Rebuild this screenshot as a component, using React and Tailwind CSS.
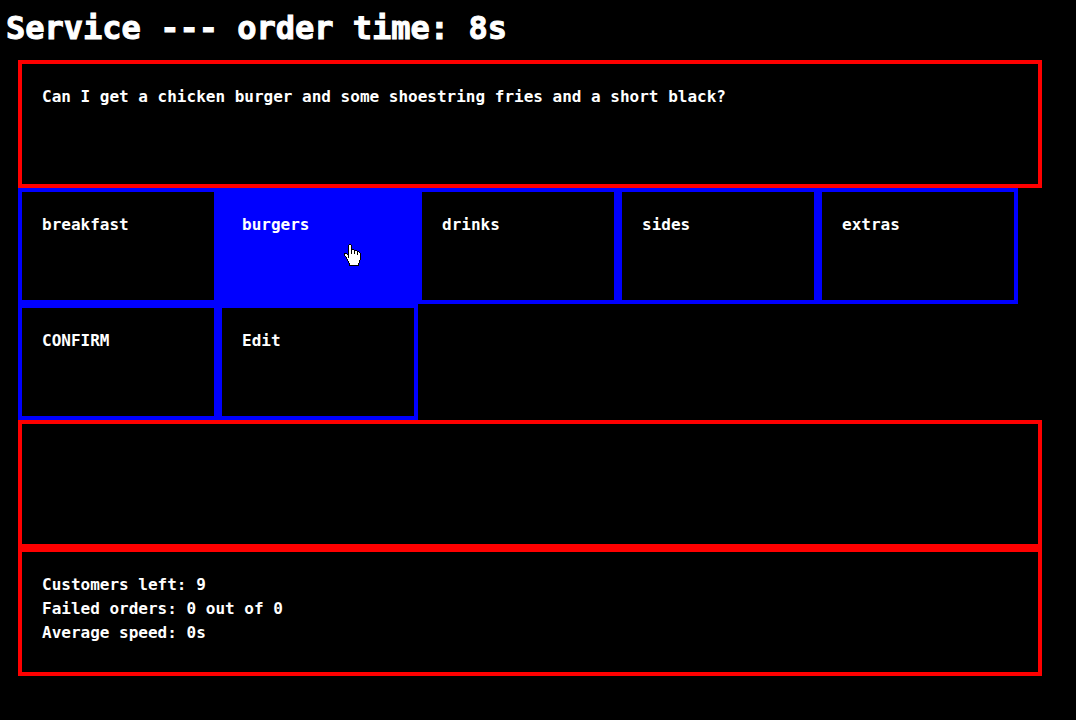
const HAND = [
  "     ##          ",
  "    #..#         ",
  "    #..#         ",
  "    #..#         ",
  "    #..#         ",
  "    #..###       ",
  "    #..#..###    ",
  "    #..#..#..##  ",
  "    #..#..#..#.# ",
  "### #..#..#..#..#",
  "#..##........#..#",
  "#...#...........#",
  " #..#...........#",
  "  #.#...........#",
  "  #.............#",
  "   #............#",
  "   #...........# ",
  "    #..........# ",
  "    #..........# ",
  "     #........#  ",
  "     #........#  ",
  "     ##########  ",
];

function pixels(mark) {
  return HAND.map((row, y) =>
    [...row].map((c, x) => (c === mark ? `M${x} ${y}h1v1h-1z` : "")).join("")
  ).join("");
}

function HandPointer() {
  return (
    <svg
      aria-hidden="true"
      viewBox="0 0 17 22"
      shapeRendering="crispEdges"
      className="pointer-events-none absolute left-[122px] top-[52px] h-[22px] w-[17px]"
    >
      <path d={pixels("#")} fill="#000" />
      <path d={pixels(".")} fill="#fff" />
    </svg>
  );
}

function Panel({ children }) {
  return (
    <section className="min-h-32 border-4 border-[#ff0000] px-5 pt-[21px] pb-[19px]">
      {children}
    </section>
  );
}

function Option({ label, selected }) {
  return (
    <button
      type="button"
      aria-pressed={selected}
      className={`relative flex h-[116px] w-50 cursor-pointer items-start border-4 border-[#0000ff] px-5 pt-[21px] pb-[19px] text-left ${
        selected ? "bg-[#0000ff]" : "bg-black"
      }`}
    >
      {label}
      {selected && <HandPointer />}
    </button>
  );
}

const OPTIONS = ["breakfast", "burgers", "drinks", "sides", "extras", "CONFIRM", "Edit"];

export default function App() {
  return (
    <div className="min-h-screen bg-black font-['DejaVu_Sans_Mono','Liberation_Mono',monospace] text-base leading-6 font-bold text-white">
      <h1 className="px-1.5 pt-1 pb-2 text-[32px] leading-[48px] [-webkit-text-stroke:1px_white]">
        Service --- order time: 8s
      </h1>
      <main className="pr-[34px] pl-[18px]">
        <Panel>
          <p>Can I get a chicken burger and some shoestring fries and a short black?</p>
        </Panel>
        <div className="flex flex-wrap">
          {OPTIONS.map((label) => (
            <Option key={label} label={label} selected={label === "burgers"} />
          ))}
        </div>
        <Panel />
        <Panel>
          <p>Customers left: 9</p>
          <p>Failed orders: 0 out of 0</p>
          <p>Average speed: 0s</p>
        </Panel>
      </main>
    </div>
  );
}
